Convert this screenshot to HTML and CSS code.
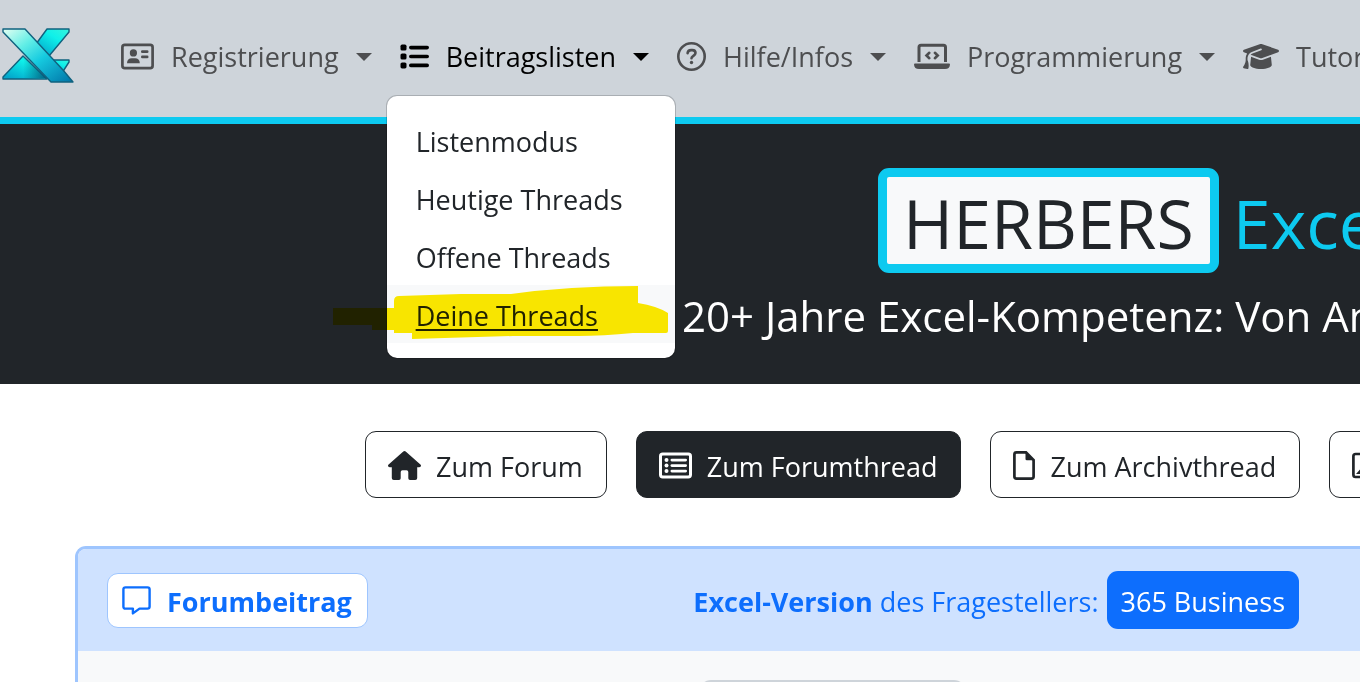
FILE: index.html
```html
<!DOCTYPE html>
<html lang="de">
<head>
    <meta charset="UTF-8">
    <meta name="viewport" content="width=device-width, initial-scale=1.0">
    <title>Herbers Excel-Forum</title>
    <link rel="stylesheet" href="styles.css">
</head>
<body>

    <!-- Navigation -->
    <nav class="navbar">
        <a href="#" class="logo" aria-label="Startseite">
            <svg width="75" height="58" viewBox="0 0 75 58">
                <defs>
                    <linearGradient id="xfront" x1="0" y1="0" x2="1" y2="1">
                        <stop offset="0" stop-color="#e4fff2"/>
                        <stop offset="0.3" stop-color="#62eee6"/>
                        <stop offset="0.55" stop-color="#16cbe0"/>
                        <stop offset="1" stop-color="#0072a6"/>
                    </linearGradient>
                    <linearGradient id="xback" x1="1" y1="0" x2="0.2" y2="1">
                        <stop offset="0" stop-color="#35f4dc"/>
                        <stop offset="0.4" stop-color="#0ff0ea"/>
                        <stop offset="1" stop-color="#02a6cb"/>
                    </linearGradient>
                    <linearGradient id="xshade" x1="0" y1="0" x2="1" y2="0">
                        <stop offset="0.4" stop-color="#005577" stop-opacity="0"/>
                        <stop offset="1" stop-color="#005577" stop-opacity="0.9"/>
                    </linearGradient>
                </defs>
                <g stroke="#10627f" stroke-width="1.4" stroke-linejoin="round">
                    <path fill="url(#xback)" d="M47 2h22v3L49 29l-13-12z"/>
                    <path fill="url(#xback)" d="M52 33h17v2L62 46l-11-9z"/>
                    <path fill="url(#xback)" d="M23 29L3 50v2h44z"/>
                    <path fill="url(#xshade)" stroke="none" d="M24 30L8 51h38z"/>
                    <path fill="url(#xfront)" d="M3 2h22l38 41 10 12H51L3 5z"/>
                </g>
            </svg>
        </a>
        <ul class="nav-liste">
            <li class="nav-item">
                <a href="#" class="nav-link">
                    <svg width="33" height="29" viewBox="0 0 33 29">
                        <rect x="1.4" y="2.9" width="30.2" height="23.2" rx="2.4" fill="none" stroke="currentColor" stroke-width="2.7"/>
                        <g fill="currentColor">
                            <circle cx="12.4" cy="10.9" r="3.6"/>
                            <path d="M6 21.3c0-3.200 2-5 4.700-5h3.400c2.700 0 4.700 1.800 4.700 5z"/>
                            <rect x="20" y="8.300" width="7.500" height="2.700" rx="1.300"/>
                            <rect x="20" y="13.600" width="7.500" height="2.700" rx="1.300"/>
                        </g>
                    </svg>
                    <span>Registrierung</span>
                </a>
            </li>
            <li class="nav-item">
                <a href="#" class="nav-link aktiv">
                    <svg width="29" height="29" viewBox="0 0 29 29" fill="currentColor">
                        <rect x="0.500" y="2.600" width="6" height="6" rx="1.600"/>
                        <rect x="0.500" y="11.500" width="6" height="6" rx="1.600"/>
                        <rect x="0.500" y="20.400" width="6" height="6" rx="1.600"/>
                        <rect x="9" y="3.800" width="20" height="3.600" rx="1.800"/>
                        <rect x="9" y="12.700" width="20" height="3.600" rx="1.800"/>
                        <rect x="9" y="21.600" width="20" height="3.600" rx="1.800"/>
                    </svg>
                    <span>Beitragslisten</span>
                </a>
                <ul class="dropdown">
                    <li><a href="#">Listenmodus</a></li>
                    <li><a href="#">Heutige Threads</a></li>
                    <li><a href="#">Offene Threads</a></li>
                    <li><a href="#" class="gewaehlt">Deine Threads</a></li>
                </ul>
                <!-- Textmarker -->
                <svg class="marker" width="336" height="54" viewBox="0 0 336 54">
                    <path fill="#ffeb00" d="M0 22H61V15q0-5 5-5L128 8H178Q236 0 305 0V17Q324 20 335 27V45q0 2-2 2H300Q270 50 245 50H180L79 53V47H61V44H39V39H0z"/>
                </svg>
            </li>
            <li class="nav-item">
                <a href="#" class="nav-link">
                    <svg width="29" height="29" viewBox="0 0 29 29" fill="none" stroke="currentColor">
                        <circle cx="14.500" cy="14.500" r="13.200" stroke-width="2.600"/>
                        <path d="M10.600 11.200c.2-2 1.600-3.100 3.500-3.100h1.200c1.900 0 3.200 1.300 3.200 3 0 2.600-4 2.900-4 5.200" stroke-width="2.600" stroke-linecap="round"/>
                        <circle cx="14.500" cy="20.500" r="1.700" fill="currentColor" stroke="none"/>
                    </svg>
                    <span>Hilfe/Infos</span>
                </a>
            </li>
            <li class="nav-item">
                <a href="#" class="nav-link">
                    <svg width="36" height="29" viewBox="0 0 36 29">
                        <path d="M5 20V5.300Q5 3.300 7 3.300H29.500Q31.500 3.300 31.500 5.300V20" fill="none" stroke="currentColor" stroke-width="3"/>
                        <path fill="currentColor" d="M1 21.500H35q1 0 1 1-.3 4.500-5 4.500H5Q.3 27 0 22.500q0-1 1-1z"/>
                        <path d="M15.300 10.800L12.500 13.500l2.800 2.700M20.900 10.800l2.800 2.700-2.800 2.700" fill="none" stroke="currentColor" stroke-width="2.600" stroke-linecap="round"/>
                    </svg>
                    <span>Programmierung</span>
                </a>
            </li>
            <li class="nav-item">
                <a href="#" class="nav-link">
                    <svg width="36" height="29" viewBox="0 0 640 512" fill="currentColor">
                        <path d="M320 32c-8.100 0-16.100 1.400-23.700 4.100L15.800 137.400C6.300 140.900 0 149.900 0 160s6.300 19.100 15.800 22.600l57.900 20.900C57.300 229.300 48 259.800 48 291.900V320c0 28.400-10.800 57.700-22.300 80.800-6.500 13-13.900 25.800-22.500 37.600C0 442.700-.9 448.300.9 453.400s6 8.900 11.200 10.200l64 16c4.200 1.100 8.700.3 12.400-2s6.300-6.100 7.100-10.400c8.600-42.800 4.300-81.200-2.100-108.700C90.300 344.300 86 329.800 80 316.500v-24.600c0-30.200 10.200-58.700 27.900-81.500 12.900-15.500 29.600-28 49.200-35.700l157-61.700c8.200-3.200 17.500.8 20.700 9s-.8 17.500-9 20.700l-157 61.700c-12.400 4.900-23.300 12.400-32.200 21.600l159.600 57.600c7.600 2.700 15.600 4.100 23.700 4.100s16.100-1.400 23.700-4.100l280.600-101c9.500-3.400 15.800-12.500 15.800-22.600s-6.300-19.100-15.800-22.600L343.700 36.100C336.100 33.400 328.100 32 320 32zM128 408c0 35.300 86 72 192 72s192-36.700 192-72L496.700 262.600 354.500 314c-11.100 4-22.800 6-34.500 6s-23.500-2-34.500-6L143.300 262.600 128 408z"/>
                    </svg>
                    <span>Tutorials</span>
                </a>
            </li>
        </ul>
    </nav>

    <!-- Kopfbereich -->
    <header class="hero">
        <h1><span class="marke">HERBERS</span><span class="titel">Excel-Forum</span></h1>
        <p>20+ Jahre Excel-Kompetenz: Von Anwendern für Anwender</p>
    </header>

    <!-- Schaltflächen -->
    <div class="aktionen">
        <button type="button" class="btn">
            <svg width="33" height="29" viewBox="0 0 33 29" fill="currentColor">
                <path d="M15.300.5q1.200-1 2.400 0L32.400 13.400q1 1 .3 2-.4.800-1.600.8H29.200V27q0 2-2 2H22q-1.700 0-1.700-1.700V21q0-1.800-1.800-1.800H14.500q-1.800 0-1.800 1.800v6.300q0 1.700-1.700 1.700H5.800q-2 0-2-2V16.200H1.900q-1.200 0-1.600-.8-.7-1 .3-2z"/>
            </svg>
            <span>Zum Forum</span>
        </button>
        <button type="button" class="btn dunkel">
            <svg width="33" height="29" viewBox="0 0 33 29" fill="currentColor">
                <rect x="1.500" y="3" width="30" height="23" rx="2.200" fill="none" stroke="currentColor" stroke-width="3"/>
                <circle cx="7.500" cy="9" r="2"/>
                <circle cx="7.500" cy="14.500" r="2"/>
                <circle cx="7.500" cy="20" r="2"/>
                <rect x="11.500" y="7.700" width="16.500" height="2.700" rx="1.300"/>
                <rect x="11.500" y="13.200" width="16.500" height="2.700" rx="1.300"/>
                <rect x="11.500" y="18.700" width="16.500" height="2.700" rx="1.300"/>
            </svg>
            <span>Zum Forumthread</span>
        </button>
        <button type="button" class="btn">
            <svg width="22" height="29" viewBox="0 0 22 29">
                <path d="M3.500 1.400H13L20.600 9V25.500q0 2.100-2.100 2.100h-15q-2.100 0-2.100-2.100v-22q0-2.100 2.100-2.100z" fill="none" stroke="currentColor" stroke-width="2.700"/>
                <path fill="currentColor" d="M12.500 1v7q0 1.300 1.300 1.300H21z"/>
            </svg>
            <span>Zum Archivthread</span>
        </button>
        <button type="button" class="btn">
            <svg width="29" height="29" viewBox="0 0 29 29">
                <rect x="1.400" y="3" width="26" height="23" rx="2.200" fill="none" stroke="currentColor" stroke-width="2.700"/>
                <path fill="currentColor" d="M4 23l7-8 4 4 4-6 6 10z"/>
            </svg>
            <span>Bilder</span>
        </button>
    </div>

    <!-- Forumbeitrag -->
    <main class="beitrag">
        <div class="beitrag-kopf">
            <button type="button" class="btn-beitrag">
                <svg width="29" height="29" viewBox="0 0 29 29">
                    <path d="M3.500 1.400h22q2.100 0 2.100 2.100v17q0 2.100-2.100 2.100H17.500L10.900 27.400V22.600H3.500q-2.100 0-2.100-2.100v-17q0-2.100 2.100-2.100z" fill="none" stroke="currentColor" stroke-width="2.400" stroke-linejoin="round"/>
                </svg>
                <span>Forumbeitrag</span>
            </button>
            <div class="version">
                <span><b>Excel-Version</b> des Fragestellers:</span>
                <span class="badge">365 Business</span>
            </div>
        </div>
        <div class="beitrag-inhalt">
            <div class="kasten"></div>
        </div>
    </main>

</body>
</html>
```

FILE: styles.css
```css
/* Allgemein */
* {
    box-sizing: border-box;
}

body {
    margin: 0;
    font-family: "Open Sans", "Noto Sans", sans-serif;
    font-size: 27px;
    line-height: 43px;
    color: #212529;
    background-color: #fff;
    overflow: hidden;
    white-space: nowrap;
}

button {
    font: inherit;
    cursor: pointer;
}

svg {
    display: block;
    flex: none;
}

ul {
    list-style: none;
    margin: 0;
    padding: 0;
}

/* Navigation */
.navbar {
    display: flex;
    align-items: center;
    padding: 20px 0 26px;
    background-color: #ced4da;
    border-bottom: 7px solid #0dcaf0;
}

.logo {
    width: 107px;
    flex: none;
}

.nav-liste {
    display: flex;
}

.nav-item {
    position: relative;
    flex: none;
}

.nav-link {
    display: flex;
    align-items: center;
    gap: 17px;
    padding: 15px 14px 13px;
    color: #4d4e50;
    text-decoration: none;
}

.nav-link span {
    padding-top: 1px;
    line-height: 42px;
}

.nav-link::after {
    content: "";
    border-top: 8px solid;
    border-left: 8px solid transparent;
    border-right: 8px solid transparent;
}

.nav-link.aktiv {
    color: #000;
}

/* Dropdown */
.dropdown {
    position: absolute;
    top: 75px;
    left: 0;
    z-index: 10;
    width: 290px;
    padding: 15px 0;
    background-color: #fff;
    border: 1px solid rgba(0, 0, 0, 0.175);
    border-radius: 11px;
    background-clip: padding-box;
}

.dropdown a {
    display: block;
    padding: 9px 29px 6px;
    color: #212529;
    text-decoration: none;
}

.dropdown .gewaehlt {
    background-color: #f8f9fa;
    text-decoration: underline;
    text-decoration-thickness: 2px;
    text-underline-offset: 3px;
}

.marker {
    position: absolute;
    top: 266px;
    left: -53px;
    z-index: 11;
    mix-blend-mode: multiply;
    pointer-events: none;
}

/* Kopfbereich */
.hero {
    padding: 44px 0 36px 682px;
    background-color: #212529;
    color: #fff;
}

.hero h1 {
    display: flex;
    align-items: center;
    gap: 14px;
    margin: 0 0 11px 196px;
    font-size: 68px;
    font-weight: 400;
    line-height: 83px;
    color: #0dcaf0;
}

.marke {
    padding: 4px 16px 0;
    color: #212529;
    background-color: #f8f9fa;
    border: 9px solid #0dcaf0;
    border-radius: 11px;
}

.titel {
    padding-top: 4px;
}

.hero p {
    margin: 0;
    font-size: 42px;
    line-height: 64px;
}

/* Schaltflächen */
.aktionen {
    display: flex;
    gap: 29px;
    padding: 47px 0 48px 365px;
}

.btn {
    display: flex;
    align-items: center;
    gap: 15px;
    flex: none;
    padding: 12px 23px 10px 22px;
    color: #212529;
    background-color: #fff;
    border: 1px solid #212529;
    border-radius: 11px;
}

.btn span,
.btn-beitrag span {
    padding-top: 2px;
    line-height: 41px;
}

.btn.dunkel {
    color: #fff;
    background-color: #212529;
}

/* Forumbeitrag */
.beitrag {
    margin-left: 75px;
    background-color: #f8f9fa;
    border: 3px solid #9ec5fe;
    border-right: 0;
    border-radius: 11px 0 0 0;
    overflow: hidden;
}

.beitrag-kopf {
    display: flex;
    align-items: center;
    justify-content: space-between;
    padding: 22px 61px 22px 29px;
    color: #0d6efd;
    background-color: #cfe2ff;
}

.btn-beitrag {
    display: flex;
    align-items: center;
    gap: 16px;
    padding: 5px 15px 5px 14px;
    font-weight: 700;
    color: #0d6efd;
    background-color: #fff;
    border: 1px solid #9ec5fe;
    border-radius: 11px;
}

.version {
    display: flex;
    align-items: center;
    gap: 8px;
}

.version span {
    padding-top: 2px;
    line-height: 41px;
}

.version .badge {
    padding: 10px 14px 7px;
    color: #fff;
    background-color: #0d6efd;
    border-radius: 11px;
}

.beitrag-inhalt {
    padding: 29px 0 0 622px;
}

.kasten {
    width: 265px;
    height: 60px;
    background-color: #ced4da;
    border-radius: 11px;
}
```
